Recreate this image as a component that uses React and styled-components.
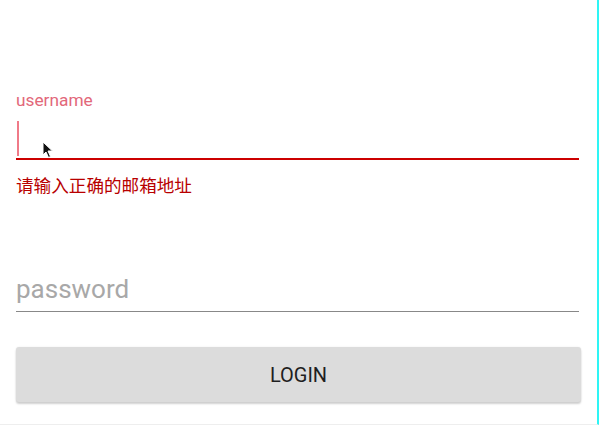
import React from "react";
import styled, { createGlobalStyle } from "styled-components";

const Global = createGlobalStyle`
  html, body {
    margin: 0;
    padding: 0;
    background: #fff;
    font-family: Roboto, "Noto Sans CJK SC", sans-serif;
  }
`;

export default function App() {
  return (
    <>
      <Global />
      <Page>
        <Form>
          <Field>
            <FloatLabel>username</FloatLabel>
            <InputBox $error>
              <Caret />
            </InputBox>
            <ErrorText>请输入正确的邮箱地址</ErrorText>
          </Field>
          <PasswordInput type="password" placeholder="password" />
          <LoginButton>LOGIN</LoginButton>
        </Form>
        <Pointer width="12" height="18" viewBox="0 0 12 18">
          <path d="M1 1 L1 14 L4 11 L6.5 16.5 L8.5 15.5 L6 10 L10.5 10 Z" fill="#111" stroke="#fff" strokeWidth="1" />
        </Pointer>
      </Page>
    </>
  );
}

const Page = styled.div`
  position: relative;
  width: 597px;
  height: 424px;
  border-right: 2px solid #2ef5f5;
  border-bottom: 1px solid #eeeeee;
  box-sizing: content-box;
`;

const Form = styled.div`
  display: flex;
  flex-direction: column;
  padding: 90px 18px 0 16px;
`;

const Field = styled.div`
  display: flex;
  flex-direction: column;
`;

const FloatLabel = styled.label`
  font-size: 17.3px;
  line-height: 20px;
  color: #e2687a;
`;

const InputBox = styled.div`
  height: 48px;
  border-bottom: 2px solid ${(p) => (p.$error ? "#cc0000" : "#888")};
  display: flex;
  align-items: flex-start;
`;

const Caret = styled.span`
  display: block;
  width: 2px;
  height: 35px;
  margin: 11px 0 0 1px;
  background: #f07a88;
`;

const ErrorText = styled.div`
  margin-top: 14px;
  font-size: 17.6px;
  line-height: 24px;
  color: #b80000;
`;

const PasswordInput = styled.input`
  margin-top: 78px;
  height: 36px;
  padding: 0 0 10px 0;
  border: none;
  border-bottom: 1px solid #888;
  outline: none;
  font-family: Roboto, sans-serif;
  font-size: 26px;
  line-height: 30px;
  background: transparent;
  box-sizing: border-box;
  &::placeholder {
    color: #a8a8a8;
  }
`;

const LoginButton = styled.button`
  margin: 35px -2px 0 0;
  height: 55px;
  border: none;
  border-radius: 3px;
  background: #dcdcdc;
  box-shadow: 0 2px 2px rgba(0, 0, 0, 0.18), 0 0 2px rgba(0, 0, 0, 0.08);
  font-family: Roboto, sans-serif;
  font-size: 20px;
  font-weight: 400;
  color: #1f1f1f;
  cursor: pointer;
`;

const Pointer = styled.svg`
  position: absolute;
  left: 42px;
  top: 141px;
`;
